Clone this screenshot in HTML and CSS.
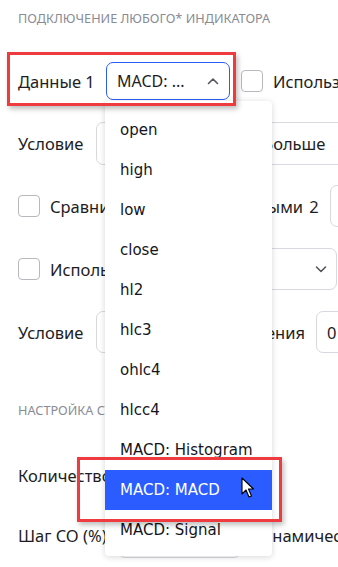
FILE: index.html
```html
<!DOCTYPE html>
<html lang="ru">

<head>
    <meta charset="UTF-8">
    <meta name="viewport" content="width=device-width, initial-scale=1.0">
    <title>Подключение индикатора</title>
    <link rel="stylesheet" href="styles.css">
</head>

<body>
    <div class="page">
        <div class="section-title">Подключение любого* индикатора</div>

        <div class="row row-first">
            <span class="label label-data">Данные 1</span>
            <div class="select select-source is-open">
                <span>MACD: ...</span>
                <svg class="chevron" width="12" height="8" viewBox="0 0 12 8">
                    <polyline points="1.5,6.5 6,2 10.5,6.5" />
                </svg>
            </div>
            <label class="check check-inline"><span class="box"></span>Использовать значение</label>
        </div>

        <div class="row">
            <span class="label label-cond">Условие</span>
            <div class="select select-cond"><span>Больше</span></div>
        </div>

        <div class="row">
            <label class="check check-compare"><span class="box"></span>Сравнить значение с данными 2</label>
            <div class="input input-wide"></div>
        </div>

        <div class="row">
            <label class="check check-use"><span class="box"></span>Использовать</label>
            <div class="select select-use">
                <span></span>
                <svg class="chevron" width="12" height="8" viewBox="0 0 12 8">
                    <polyline points="1.5,2 6,6.5 10.5,2" />
                </svg>
            </div>
        </div>

        <div class="row">
            <span class="label label-cond">Условие</span>
            <div class="input input-cond"></div>
            <span class="label label-value">Значения</span>
            <div class="input input-value">0</div>
        </div>

        <div class="section-title section-second">Настройка страховочных ордеров</div>

        <div class="row row-count">
            <span class="label">Количество СО</span>
        </div>

        <div class="row row-step">
            <span class="label label-step">Шаг CO (%)</span>
            <div class="input input-step"></div>
            <span class="label label-dyn">Динамический</span>
        </div>
    </div>

    <!-- open dropdown of "Данные 1" -->
    <ul class="menu">
        <li>open</li>
        <li>high</li>
        <li>low</li>
        <li>close</li>
        <li>hl2</li>
        <li>hlc3</li>
        <li>ohlc4</li>
        <li>hlcc4</li>
        <li>MACD: Histogram</li>
        <li class="active">MACD: MACD</li>
        <li>MACD: Signal</li>
    </ul>

    <!-- red marks from the screenshot -->
    <div class="mark mark-top"></div>
    <div class="mark mark-bottom"></div>

    <svg class="cursor" width="14" height="22" viewBox="0 0 14 22">
        <path d="M1 1 L1 17 L5 13 L8 20 L10.5 19 L7.5 12 L12.5 12 Z" fill="#fff" stroke="#000" stroke-width="1.1" stroke-linejoin="round" />
    </svg>
</body>

</html>
```

FILE: styles.css
```css
html,
body {
    margin: 0;
    overflow: hidden;
}

body {
    font-family: "Noto Sans", sans-serif;
    color: #1d1d24;
    background: #fff;
    height: 567px;
}

.page {
    width: 600px;
    padding: 10px 0 0 18px;
}

.section-title {
    font-size: 12.7px;
    line-height: 16px;
    text-transform: uppercase;
    color: #898b95;
}

.section-second {
    margin-top: 49px;
}

.row {
    display: flex;
    align-items: center;
    height: 42px;
    margin-top: 21px;
    font-size: 16.5px;
    white-space: nowrap;
}

.row-first {
    margin-top: 34px;
}

.row-first+.row {
    margin-top: 20px;
}

.row-count {
    margin-top: 36px;
}

.row-step {
    margin-top: 18px;
}

.label-data {
    width: 88px;
}

.label-cond {
    width: 78px;
}

.label-step {
    width: 100px;
}

.label-value {
    width: 61px;
    margin-left: 8px;
    margin-right: 11px;
    justify-content: flex-end;
    display: flex;
}

.label-dyn {
    margin-left: 9px;
}

.select,
.input {
    box-sizing: border-box;
    height: 42px;
    border: 1px solid #d8d8de;
    border-radius: 7px;
    display: flex;
    align-items: center;
    padding-left: 10px;
}

.select-source {
    width: 124px;
    height: 38px;
    border: 1.5px solid #2c5ef5;
    justify-content: space-between;
    padding-right: 10px;
    font-size: 16px;
}

.chevron polyline {
    fill: none;
    stroke: #55565e;
    stroke-width: 1.6;
    stroke-linecap: round;
    stroke-linejoin: round;
}

.select-cond {
    width: 300px;
    height: 43px;
    padding-left: 166px;
}

.select-use {
    width: 206px;
    margin-left: auto;
    margin-right: 281px;
    justify-content: space-between;
    padding-right: 9px;
}

.input-wide {
    width: 80px;
    margin-left: 9px;
}

.input-cond {
    width: 140px;
}

.input-value {
    width: 60px;
}

.input-step {
    width: 123px;
    height: 43px;
    margin-top: 2px;
}

.check {
    display: flex;
    align-items: center;
}

.check .box {
    box-sizing: border-box;
    width: 22px;
    height: 22px;
    border: 1px solid #b8b8be;
    border-radius: 4px;
    margin-right: 10px;
}

.check-inline {
    margin-left: 11px;
}

.check-compare {
    width: 303px;
    word-spacing: 1.8px;
}

/* dropdown */
.menu {
    position: absolute;
    left: 105px;
    top: 101px;
    width: 167px;
    margin: 0;
    padding: 9px 0 6px;
    list-style: none;
    background: #fff;
    border-radius: 4px;
    box-shadow: 0 1px 6px rgba(0, 0, 0, 0.16);
    font-family: "DejaVu Sans", sans-serif;
    font-size: 15px;
    color: #15161d;
}

.menu li {
    height: 40px;
    line-height: 40px;
    padding-left: 15px;
}

.menu li.active {
    background: #2a5cff;
    color: #fff;
}

.mark {
    position: absolute;
    box-sizing: border-box;
    border: 3.5px solid #ed3b3f;
    box-shadow: 2px 3px 5px rgba(0, 0, 0, 0.25);
}

.mark-top {
    left: 7px;
    top: 52px;
    width: 229px;
    height: 54px;
}

.mark-bottom {
    left: 77px;
    top: 457px;
    width: 205px;
    height: 65px;
}

.cursor {
    position: absolute;
    left: 241px;
    top: 477px;
}
```
